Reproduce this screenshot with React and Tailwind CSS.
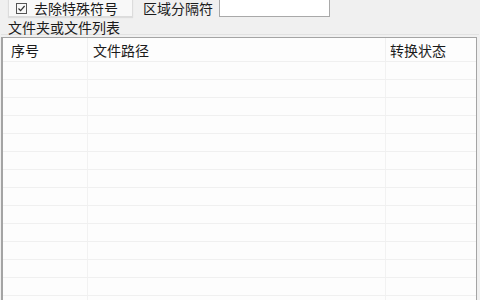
const rows = Array.from({ length: 14 })

export default function App() {
  return (
    <div
      className="w-[480px] h-[300px] overflow-hidden bg-[#f0f0f0] text-[#1b1b1b] text-[14px]"
      style={{ fontFamily: '"Noto Sans CJK SC", "Liberation Sans", sans-serif' }}
    >
      {/* top options row, cut off at the top edge */}
      <div className="flex items-center h-[22px] mt-[-5px]">
        <div className="ml-[8px] w-[125px] h-[22px] flex items-center bg-[#f8f8f8] border border-[#dcdcdc] shadow-[0_1px_1px_rgba(0,0,0,0.08)]">
          <span className="ml-[7px] w-[11px] h-[11px] mt-[4px] border border-[#555] flex items-center justify-center">
            <svg width="9" height="9" viewBox="0 0 9 9">
              <path d="M1.5 4.5 L3.6 6.6 L7.6 2" fill="none" stroke="#333" strokeWidth="1.2" />
            </svg>
          </span>
          <span className="ml-[7px] mt-[3px] leading-none">去除特殊符号</span>
        </div>
        <span className="ml-[10px] mt-[3px] leading-none">区域分隔符</span>
        <div className="ml-[6px] w-[111px] h-[22px] bg-white border border-[#a9a9a9]" />
      </div>

      <div className="pt-[3px] pl-[8px] leading-[14px]">文件夹或文件列表</div>

      <div className="h-[1px] bg-[#e2e2e2] mx-[1px]" />

      {/* list view */}
      <div className="ml-[1px] mt-[2px] w-[476px] h-[265px] bg-[#fdfdfd] border-l-2 border-t border-r border-[#a4a4a4]">
        <div className="flex h-[23px] items-center">
          <div className="w-[85px] h-full pl-[8px] pt-[1px] flex items-center border-r border-[#f0f0f0]">序号</div>
          <div className="w-[298px] h-full pl-[5px] pt-[1px] flex items-center border-r border-[#f0f0f0]">文件路径</div>
          <div className="flex-1 h-full pl-[4px] pt-[1px] flex items-center">转换状态</div>
        </div>
        {rows.map((_, i) => (
          <div key={i} className="flex h-[18px] border-t border-[#f0f0f0]">
            <div className="w-[85px] h-full border-r border-[#f2f2f2]" />
            <div className="w-[298px] h-full border-r border-[#f2f2f2]" />
            <div className="flex-1 h-full" />
          </div>
        ))}
      </div>
    </div>
  )
}
